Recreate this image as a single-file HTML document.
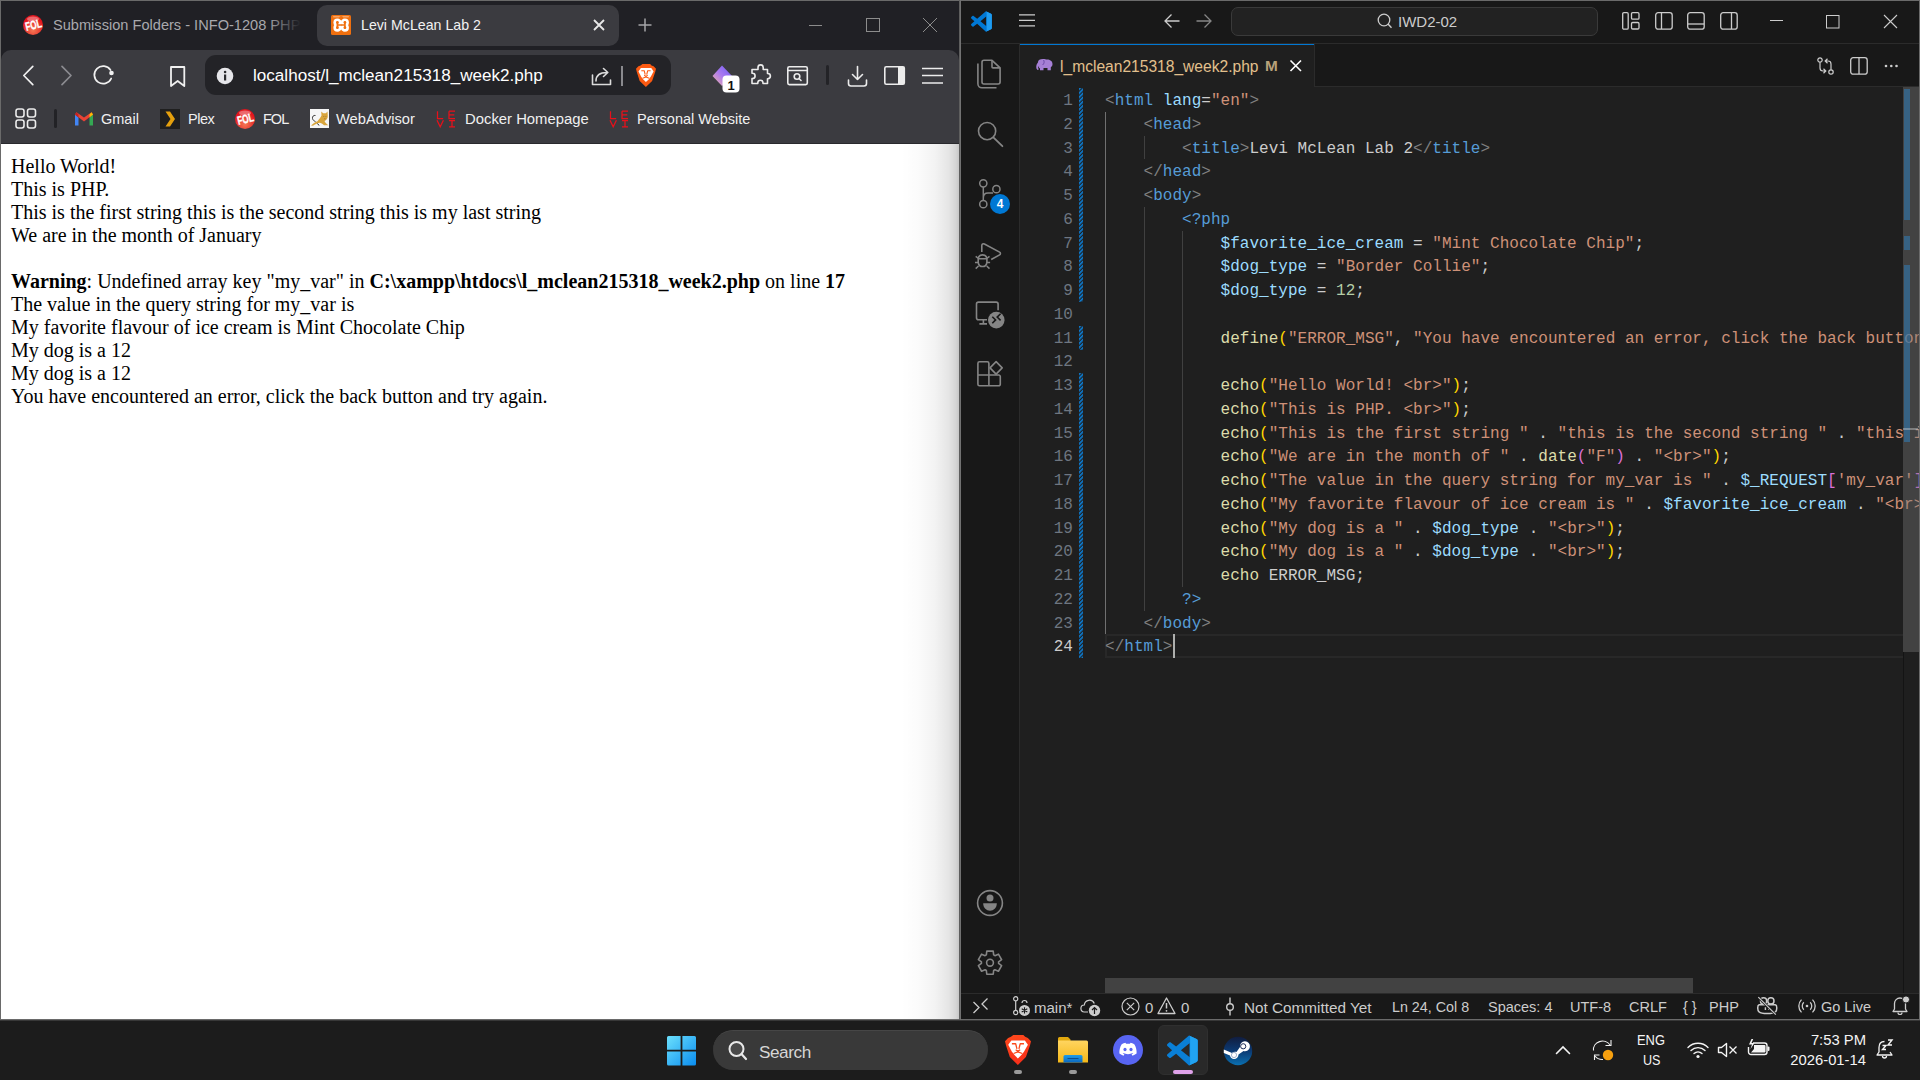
<!DOCTYPE html>
<html><head><meta charset="utf-8">
<style>
*{box-sizing:border-box;margin:0;padding:0}
html,body{width:1920px;height:1080px;overflow:hidden;background:#1c1c1c;font-family:"Liberation Sans",sans-serif}
.a{position:absolute}
svg{position:absolute;overflow:visible}
/* browser */
#br{position:absolute;left:0;top:0;width:961px;height:1021px;background:#6a6a6a}
#brin{position:absolute;left:1px;top:1px;width:958px;height:1018px;background:#202025;overflow:hidden}
#tb{position:absolute;left:0;top:49px;width:958px;height:94px;background:#3b3b40;border-radius:10px 10px 0 0}
#content{position:absolute;left:0;top:142px;width:958px;height:876px;background:#fff;border-top:1px solid #29292d}
#page{position:absolute;left:10px;top:11px;font-family:"Liberation Serif",serif;font-size:20px;line-height:23px;color:#000;white-space:pre}
.bk{top:110px;font-size:14.5px;color:#f0f0f0;white-space:pre;line-height:17px}
.levi{top:108px;font-family:"Liberation Mono",monospace;font-size:10px;line-height:9.5px;color:#e8141e;font-weight:bold;white-space:pre}
/* vscode */
#vs{position:absolute;left:961px;top:0;width:959px;height:1021px;background:#6a6a6a}
#vsin{position:absolute;left:0;top:1px;width:958px;height:1018px;background:#181818;overflow:hidden}
.code{font-family:"Liberation Mono",monospace;font-size:16px;letter-spacing:0.025px;white-space:pre;color:#cccccc}
.t{color:#808080}.n{color:#569cd6}.at{color:#9cdcfe}.s{color:#ce9178}.v{color:#9cdcfe}.f{color:#dcdcaa}.nu{color:#b5cea8}.y{color:#ffd700}.p{color:#da70d6}.w{color:#cccccc}
/* taskbar */
#task{position:absolute;left:0;top:1021px;width:1920px;height:59px;background:#1c1c1c}
</style></head><body>
<div id="br"><div id="brin">
  <!-- tab strip -->
  <svg style="left:21px;top:13px" width="22" height="22" viewBox="0 0 22 22"><defs><radialGradient id="folg" cx=".5" cy=".75" r=".6"><stop offset="0" stop-color="#f47a55"/><stop offset="1" stop-color="#e2141c"/></radialGradient></defs><circle cx="11" cy="11" r="10" fill="url(#folg)"/><ellipse cx="11" cy="5" rx="6" ry="2.5" fill="#fff" opacity=".35"/><text x="11.4" y="15.3" font-family="Liberation Sans" font-weight="bold" font-size="12" fill="#fff" stroke="#fff" stroke-width=".4" text-anchor="middle" textLength="16.5" lengthAdjust="spacingAndGlyphs" transform="rotate(-14 11 11)">FOL</text></svg>
  <div class="a" style="left:52px;top:15px;font-size:14.6px;color:#a9a9ad;white-space:pre;line-height:18px">Submission Folders - INFO-1208 PHP</div>
  <div class="a" style="left:266px;top:5px;width:40px;height:38px;background:linear-gradient(90deg,rgba(32,32,37,0),#202025 85%)"></div>
  <div class="a" style="left:316px;top:4px;width:302px;height:41px;background:#3b3b40;border-radius:10px"></div>
  <svg style="left:330px;top:14px" width="20" height="20" viewBox="0 0 20 20"><rect x="0" y="0" width="20" height="20" rx="1.5" fill="#f0700f"/><rect x="2" y="1" width="16" height="1.5" rx=".7" fill="#f7b27a" opacity=".8"/><g fill="#fff"><circle cx="6.4" cy="7.4" r="4"/><circle cx="13.9" cy="7.4" r="4"/><circle cx="6.4" cy="12.7" r="4"/><circle cx="13.9" cy="12.7" r="4"/></g><circle cx="10.15" cy="2.8" r="1.9" fill="#f0700f"/><circle cx="10.15" cy="17.3" r="1.9" fill="#f0700f"/><path d="M6.4 7.4V12.7M13.9 7.4V12.7M6.4 10H13.9" stroke="#f0700f" stroke-width="1.7" stroke-linecap="round"/><circle cx="6.4" cy="7.4" r="1.4" fill="#f0700f"/><circle cx="13.9" cy="7.4" r="1.4" fill="#f0700f"/><circle cx="6.4" cy="12.7" r="1.4" fill="#f0700f"/><circle cx="13.9" cy="12.7" r="1.4" fill="#f0700f"/></svg>
  <div class="a" style="left:360px;top:15px;font-size:14.2px;color:#f2f2f2;white-space:pre;line-height:18px">Levi McLean Lab 2</div>
  <svg style="left:592px;top:18px" width="12" height="12" viewBox="0 0 12 12"><path d="M1 1L11 11M11 1L1 11" stroke="#e8e8e8" stroke-width="1.8"/></svg>
  <svg style="left:636px;top:16px" width="16" height="16" viewBox="0 0 16 16"><path d="M8 1.5V14.5M1.5 8H14.5" stroke="#a4a4a8" stroke-width="1.5"/></svg>
  <!-- window controls -->
  <svg style="left:807px;top:17px" width="16" height="16" viewBox="0 0 16 16"><path d="M1 7.5H14" stroke="#8c8c8c" stroke-width="1"/></svg>
  <svg style="left:864px;top:16px" width="16" height="16" viewBox="0 0 16 16"><rect x="1.5" y="1.5" width="13" height="13" fill="none" stroke="#8c8c8c" stroke-width="1"/></svg>
  <svg style="left:921px;top:16px" width="16" height="16" viewBox="0 0 16 16"><path d="M1 1L15 15M15 1L1 15" stroke="#8c8c8c" stroke-width="1"/></svg>

  <div id="tb"></div>
  <!-- nav icons -->
  <svg style="left:20px;top:63px" width="14" height="24" viewBox="0 0 14 24"><path d="M11.8 2.3L2.8 11.5L11.8 20.7" fill="none" stroke="#f0f0f0" stroke-width="1.7" stroke-linecap="round" stroke-linejoin="round"/></svg>
  <svg style="left:58px;top:63px" width="14" height="24" viewBox="0 0 14 24"><path d="M3 2.3L12 11.5L3 20.7" fill="none" stroke="#8b8b90" stroke-width="1.7" stroke-linecap="round" stroke-linejoin="round"/></svg>
  <svg style="left:92px;top:63px" width="24" height="24" viewBox="0 0 24 24"><path d="M18.2 14.5 A8.8 8.8 0 1 1 17.5 6" fill="none" stroke="#f0f0f0" stroke-width="1.7" stroke-linecap="round"/><circle cx="18.5" cy="9" r="2.3" fill="#f0f0f0"/></svg>
  <svg style="left:167px;top:63px" width="20" height="24" viewBox="0 0 20 24"><path d="M3 3H16.3V22L9.65 17L3 22Z" fill="none" stroke="#f0f0f0" stroke-width="1.8" stroke-linejoin="round"/></svg>
  <!-- address bar -->
  <div class="a" style="left:204px;top:54px;width:466px;height:40px;background:#232327;border-radius:11px"></div>
  <svg style="left:215px;top:66px" width="18" height="18" viewBox="0 0 18 18"><circle cx="9" cy="9" r="8.3" fill="#e6e6ea"/><rect x="8" y="7.5" width="2.2" height="6" fill="#2a2a2e"/><circle cx="9.1" cy="5" r="1.3" fill="#2a2a2e"/></svg>
  <div class="a" style="left:252px;top:65px;font-size:17.1px;color:#ffffff;white-space:pre;line-height:20px">localhost/l_mclean215318_week2.php</div>
  <svg style="left:589px;top:63px" width="24" height="24" viewBox="0 0 24 24"><path d="M2.5 11V20.5H20.5V16" fill="none" stroke="#dcdcdc" stroke-width="1.6" stroke-linejoin="round" stroke-linecap="round"/><path d="M6 17C6 11, 10 8.5, 17 8.5M13.5 4.5L17.8 8.5L13.5 12.5" fill="none" stroke="#dcdcdc" stroke-width="1.6" stroke-linecap="round" stroke-linejoin="round"/></svg>
  <div class="a" style="left:620px;top:65px;width:2px;height:20px;background:#8a8a8e"></div>
  <svg style="left:635px;top:63px" width="20" height="23" viewBox="0 0 20 23"><path d="M6.4 0H14.1L15.5 1.4L17.6 2.2L20 4.7L19.2 8L16.1 16.9L9.9 23.1L3.7 16.9L0.8 8L0 4.7L2.4 2.2L4.6 1.4Z" fill="#fb5a12"/><path d="M2.5 7.4L4.9 4.1H15.3L17.6 7.4L14.7 12.7L12.6 15.4L9.9 18.1L7.3 15.4L5.2 12.7Z" fill="#fff"/><path d="M5.3 6.7H8.2L9.2 10.6M14.6 6.7H11.7L10.7 10.6M8.2 11.3L9.95 12.4L11.7 11.3M6.6 14.2L9.95 12.9L13.3 14.2" fill="none" stroke="#fb5a12" stroke-width="1.1" stroke-linejoin="round"/></svg>
  <!-- right toolbar icons -->
  <svg style="left:709px;top:62px" width="34" height="32" viewBox="0 0 34 32"><defs><linearGradient id="rg" x1="0" y1="1" x2="1" y2="0"><stop offset="0" stop-color="#f5b6a0"/><stop offset=".5" stop-color="#a978f0"/><stop offset="1" stop-color="#6d5cf5"/></linearGradient></defs><path d="M2.5 13L12 2.5L22 13L12 23Z" fill="url(#rg)" transform="rotate(0)"/><rect x="12.5" y="12.5" width="17" height="17" rx="4" fill="#fff"/><text x="21" y="26.5" font-family="Liberation Sans" font-weight="bold" font-size="13" fill="#111" text-anchor="middle">1</text></svg>
  <svg style="left:748px;top:62px" width="24" height="24" viewBox="0 0 24 24"><path d="M9 4.5A2.6 2.6 0 0 1 14.2 4.5V6.5H18.5V10.5H18.8A2.6 2.6 0 0 1 18.8 15.7H18.5V20.5H14V19.8A2.6 2.6 0 0 0 8.8 19.8V20.5H3V15.5H3.5A2.6 2.6 0 0 0 3.5 10.3H3V6.5H9Z" fill="none" stroke="#ececec" stroke-width="1.6" stroke-linejoin="round"/></svg>
  <svg style="left:785px;top:64px" width="24" height="22" viewBox="0 0 24 22"><rect x="1.8" y="1.8" width="19.5" height="17.8" rx="1.5" fill="none" stroke="#ececec" stroke-width="1.6"/><path d="M2 5.5H21" stroke="#ececec" stroke-width="1.5"/><circle cx="11" cy="11.5" r="2.8" fill="none" stroke="#ececec" stroke-width="1.6"/><path d="M13 13.5L15 15.5" stroke="#ececec" stroke-width="1.6" stroke-linecap="round"/></svg>
  <div class="a" style="left:825px;top:64px;width:3px;height:20px;border-radius:2px;background:#232327"></div>
  <svg style="left:845px;top:63px" width="24" height="24" viewBox="0 0 24 24"><path d="M11.5 2.5V15.5M6.5 10.5L11.5 15.5L16.5 10.5" fill="none" stroke="#ececec" stroke-width="1.6" stroke-linecap="round" stroke-linejoin="round"/><path d="M2.5 16V19.5A2.5 2.5 0 0 0 5 22H18A2.5 2.5 0 0 0 20.5 19.5V16" fill="none" stroke="#ececec" stroke-width="1.6" stroke-linecap="round"/></svg>
  <svg style="left:882px;top:64px" width="24" height="22" viewBox="0 0 24 22"><rect x="1.8" y="1.8" width="19.5" height="17.5" rx="1.5" fill="none" stroke="#ececec" stroke-width="1.6"/><rect x="15" y="1.8" width="6.3" height="17.5" fill="#ececec"/></svg>
  <svg style="left:919px;top:64px" width="24" height="22" viewBox="0 0 24 22"><path d="M2 3.5H23M2 10.5H23M2 18H23" stroke="#ececec" stroke-width="1.6"/></svg>
  <!-- bookmarks -->
  <svg style="left:13px;top:106px" width="24" height="24" viewBox="0 0 24 24"><rect x="2" y="2" width="8" height="8" rx="2.2" fill="none" stroke="#ececec" stroke-width="1.6"/><rect x="13.5" y="2" width="8" height="8" rx="2.2" fill="none" stroke="#ececec" stroke-width="1.6"/><rect x="2" y="13" width="8" height="8" rx="2.2" fill="none" stroke="#ececec" stroke-width="1.6"/><rect x="13.5" y="13" width="8" height="8" rx="2.2" fill="none" stroke="#ececec" stroke-width="1.6"/></svg>
  <div class="a" style="left:53px;top:108px;width:2.5px;height:19px;border-radius:2px;background:#222226"></div>
  <svg style="left:73px;top:110px" width="20" height="16" viewBox="0 0 20 16"><path d="M1 3.5V14.5H4.5V6.5Z" fill="#4285f4"/><path d="M15.5 6.5V14.5H19V3.5Z" fill="#34a853"/><path d="M1 3.5L10 10.5L19 3.5L17.5 1.2L10 6.5L2.5 1.2Z" fill="#ea4335"/><path d="M15.5 3.5V6.5L19 3.5L17.5 1.2Z" fill="#fbbc04"/><path d="M1 3.5L4.5 6.5V3.5L2.5 1.2Z" fill="#c5221f"/></svg>
  <div class="a bk" style="left:100px">Gmail</div>
  <svg style="left:159px;top:108px" width="20" height="20" viewBox="0 0 20 20"><rect width="20" height="20" fill="#1f1f1f"/><path d="M5.5 2.5H10L15 10L10 17.5H5.5L10.5 10Z" fill="#e5a00d"/></svg>
  <div class="a bk" style="left:187px;letter-spacing:-0.45px">Plex</div>
  <svg style="left:233px;top:107px" width="22" height="22" viewBox="0 0 22 22"><defs><radialGradient id="folg" cx=".5" cy=".75" r=".6"><stop offset="0" stop-color="#f47a55"/><stop offset="1" stop-color="#e2141c"/></radialGradient></defs><circle cx="11" cy="11" r="10" fill="url(#folg)"/><ellipse cx="11" cy="5" rx="6" ry="2.5" fill="#fff" opacity=".35"/><text x="11.4" y="15.3" font-family="Liberation Sans" font-weight="bold" font-size="12" fill="#fff" stroke="#fff" stroke-width=".4" text-anchor="middle" textLength="16.5" lengthAdjust="spacingAndGlyphs" transform="rotate(-14 11 11)">FOL</text></svg>
  <div class="a bk" style="left:262px;letter-spacing:-1px">FOL</div>
  <svg style="left:309px;top:108px" width="19" height="19" viewBox="0 0 19 19"><rect width="19" height="19" fill="#f6f6f6"/><path d="M1 16.5C3 14.5 5 13 7.5 12.2C9 10.5 10.5 8.5 11.5 6.5L11.2 2.5L13.2 4.3H15.8L17.5 2.5L17.8 7C17.8 9.5 16.5 11 14.5 12C15.5 14 17 15.5 18.5 16.2H14C12.5 15 11 13.8 9.5 13.8C7 14.5 5 15.5 3 16.8Z" fill="#d9a53c"/><path d="M5.5 6.5C3.5 6 2.2 7.5 2.5 9.5C2.8 11 4 12 5.5 12.5" fill="none" stroke="#222" stroke-width=".9"/><path d="M7.5 14.5L9 16.5" stroke="#222" stroke-width="1"/><path d="M13.5 7.2L14.2 8M16.2 7.2L15.5 8M14.2 9.8H15.5" stroke="#7a5a20" stroke-width=".6"/></svg>
  <div class="a bk" style="left:335px;font-size:14.7px">WebAdvisor</div>
  <svg style="left:435px;top:109px" width="22" height="20" viewBox="0 0 22 20"><path d="M1.5 1.2V8.6H7.2M13 1.2H19M13 1.2V8.6H19M13 4.9H18.3M1 10.2L4.2 16.8L7.4 10.2M13 10.5H19M16 10.5V16.8M13 16.8H19" fill="none" stroke="#e8101a" stroke-width="1.25"/></svg>
  <div class="a bk" style="left:464px;font-size:14.85px">Docker Homepage</div>
  <svg style="left:608px;top:109px" width="22" height="20" viewBox="0 0 22 20"><path d="M1.5 1.2V8.6H7.2M13 1.2H19M13 1.2V8.6H19M13 4.9H18.3M1 10.2L4.2 16.8L7.4 10.2M13 10.5H19M16 10.5V16.8M13 16.8H19" fill="none" stroke="#e8101a" stroke-width="1.25"/></svg>
  <div class="a bk" style="left:636px">Personal Website</div>

  <div id="content">
    <div class="a" style="right:0;top:0;width:58px;height:876px;background:linear-gradient(90deg,rgba(0,0,0,0),rgba(0,0,0,.015) 30%,rgba(0,0,0,.05) 60%,rgba(0,0,0,.1) 82%,rgba(0,0,0,.16) 94%,rgba(0,0,0,.22))"></div>
    <div id="page">Hello World!
This is PHP.
This is the first string this is the second string this is my last string
We are in the month of January

<b>Warning</b>: Undefined array key "my_var" in <b>C:\xampp\htdocs\l_mclean215318_week2.php</b> on line <b>17</b>
The value in the query string for my_var is 
My favorite flavour of ice cream is Mint Chocolate Chip
My dog is a 12
My dog is a 12
You have encountered an error, click the back button and try again.</div>
  </div>
</div></div>
<div class="a" style="left:959px;top:0;width:1px;height:1021px;background:#5e5e5e"></div><div class="a" style="left:960px;top:0;width:1px;height:1021px;background:#727272"></div>
<div id="vs"><div id="vsin">
<div class="a" style="left:0px;top:42px;width:958px;height:1px;background:#2b2b2b"></div>
<div class="a" style="left:58px;top:43px;width:1px;height:949px;background:#2b2b2b"></div>
<div class="a" style="left:354px;top:85px;width:604px;height:1px;background:#2b2b2b"></div>
<div class="a" style="left:59px;top:43px;width:294px;height:43px;background:#1f1f1f"></div>
<div class="a" style="left:59px;top:43px;width:294px;height:1px;background:#0078d4"></div>
<div class="a" style="left:353px;top:43px;width:1px;height:43px;background:#2b2b2b"></div>
<div class="a" style="left:59px;top:86px;width:899px;height:906px;background:#1f1f1f"></div>
<div class="a" style="left:0px;top:992px;width:958px;height:1px;background:#2b2b2b"></div>
<svg style="left:10px;top:10px" width="22" height="21" viewBox="0 0 22 21"><g transform="scale(0.21)"><path d="M71 1.5L95.5 13.2C97.8 14.3 99.2 16.6 99.2 19.1V80.9C99.2 83.4 97.8 85.7 95.5 86.8L71 98.5L29.4 60.6L12.2 73.7C10.6 74.9 8.4 74.8 6.9 73.5L1.4 68.5C-.4 66.8 -.4 64 1.4 62.3L16.3 48.8L1.4 35.3C-.4 33.6 -.4 30.8 1.4 29.1L6.9 24.1C8.4 22.8 10.6 22.7 12.2 23.9L29.4 37L71 1.5ZM72.5 26.7L45 48.8L72.5 70.9Z" fill="#0078d4" fill-rule="evenodd"/><path d="M71 1.5L95.5 13.2C97.8 14.3 99.2 16.6 99.2 19.1V80.9C99.2 83.4 97.8 85.7 95.5 86.8L71 98.5C73 97 74.5 95 74.5 92V7.5C74.5 4.5 73 2.5 71 1.5Z" fill="#1f9cf0"/></g></svg>
<svg style="left:57px;top:11px" width="18" height="16" viewBox="0 0 18 16"><path d="M1 2.8H17M1 8.3H17M1 13.8H17" stroke="#cccccc" stroke-width="1.3"/></svg>
<svg style="left:202px;top:11px" width="18" height="18" viewBox="0 0 18 18"><path d="M16.5 9H2M8.5 2.5L2 9L8.5 15.5" fill="none" stroke="#cccccc" stroke-width="1.3"/></svg>
<svg style="left:234px;top:11px" width="18" height="18" viewBox="0 0 18 18"><path d="M1.5 9H16M9.5 2.5L16 9L9.5 15.5" fill="none" stroke="#868686" stroke-width="1.3"/></svg>
<div class="a" style="left:270px;top:6px;width:367px;height:29px;background:#222222;border:1px solid #3a3a3a;border-radius:7px"></div>
<svg style="left:414px;top:11px" width="18" height="18" viewBox="0 0 18 18"><circle cx="9" cy="8" r="5.8" fill="none" stroke="#cccccc" stroke-width="1.3"/><path d="M13 12L16.5 15.8" stroke="#cccccc" stroke-width="1.4"/></svg>
<div class="a" style="left:437px;top:12px;white-space:pre;font-size:15px;line-height:17px;color:#cccccc">IWD2-02</div>
<svg style="left:660px;top:10px" width="20" height="20" viewBox="0 0 20 20"><rect x="1.7" y="1.7" width="5.5" height="16.5" rx="1.2" fill="none" stroke="#cccccc" stroke-width="1.3"/><rect x="10.5" y="1.7" width="7.5" height="6.5" rx="1.2" fill="none" stroke="#cccccc" stroke-width="1.3"/><rect x="10.5" y="11.5" width="7.5" height="6.5" rx="1.2" fill="none" stroke="#cccccc" stroke-width="1.3"/></svg>
<svg style="left:693px;top:10px" width="20" height="20" viewBox="0 0 20 20"><rect x="1.7" y="1.7" width="16.5" height="16.5" rx="2.5" fill="none" stroke="#cccccc" stroke-width="1.3"/><path d="M7.5 2V18" stroke="#cccccc" stroke-width="1.3"/></svg>
<svg style="left:725px;top:10px" width="20" height="20" viewBox="0 0 20 20"><rect x="1.7" y="1.7" width="16.5" height="16.5" rx="2.5" fill="none" stroke="#cccccc" stroke-width="1.3"/><path d="M2 13H18" stroke="#cccccc" stroke-width="1.3"/></svg>
<svg style="left:758px;top:10px" width="20" height="20" viewBox="0 0 20 20"><rect x="1.7" y="1.7" width="16.5" height="16.5" rx="2.5" fill="none" stroke="#cccccc" stroke-width="1.3"/><path d="M12.5 2V18" stroke="#cccccc" stroke-width="1.3"/></svg>
<svg style="left:807px;top:11px" width="18" height="18" viewBox="0 0 18 18"><path d="M2 8.5H15" stroke="#cccccc" stroke-width="1"/></svg>
<svg style="left:863px;top:12px" width="18" height="18" viewBox="0 0 18 18"><rect x="2.5" y="2.5" width="12.5" height="12.5" fill="none" stroke="#cccccc" stroke-width="1"/></svg>
<svg style="left:921px;top:12px" width="18" height="18" viewBox="0 0 18 18"><path d="M2 2L15 15M15 2L2 15" stroke="#cccccc" stroke-width="1.1"/></svg>
<svg style="left:74px;top:57px" width="19" height="14" viewBox="0 0 19 14"><path d="M3 4C3 2 5 1 8 1C10 1 11 1.5 12 1.5C15 1.5 17.5 3 17.5 6C17.5 7.5 17 8.5 15.8 9.2V12.2H12.5V10H8.5V12.2H5V10.5C4 10 3.5 9 3.2 8C2.8 9 3 10.5 4 11.2L2.5 12C1.2 11 1 9 1.5 7C2 5.5 3 5 3 4Z" fill="#a67fd6"/><path d="M8.6 2C9.4 3.5 9.4 5.5 7.6 7" fill="none" stroke="#6c48a8" stroke-width="1"/></svg>
<div class="a" style="left:99px;top:57px;white-space:pre;font-size:15.6px;line-height:18px;color:#e2c08d">l_mclean215318_week2.php</div>
<div class="a" style="left:304px;top:56px;white-space:pre;font-size:15.3px;font-weight:bold;line-height:18px;color:#b9a27a">M</div>
<svg style="left:326px;top:56px" width="18" height="18" viewBox="0 0 18 18"><path d="M3.5 3.5L14 14M14 3.5L3.5 14" stroke="#ffffff" stroke-width="1.6"/></svg>
<svg style="left:855px;top:55px" width="20" height="20" viewBox="0 0 20 20"><circle cx="4" cy="4" r="2.2" fill="none" stroke="#cccccc" stroke-width="1.2"/><circle cx="15" cy="16" r="2.2" fill="none" stroke="#cccccc" stroke-width="1.2"/><path d="M4 6.2V12C4 14 5 15 7 15H9.5M7.5 12.8L9.8 15L7.5 17.2" fill="none" stroke="#cccccc" stroke-width="1.2"/><path d="M15 13.8V8C15 6 14 5 12 5H9.5M11.5 2.8L9.2 5L11.5 7.2" fill="none" stroke="#cccccc" stroke-width="1.2"/></svg>
<svg style="left:888px;top:55px" width="20" height="20" viewBox="0 0 20 20"><rect x="1.7" y="1.7" width="16.5" height="16.5" rx="2.5" fill="none" stroke="#cccccc" stroke-width="1.3"/><path d="M10 2V18" stroke="#cccccc" stroke-width="1.3"/></svg>
<svg style="left:923px;top:62px" width="16" height="6" viewBox="0 0 16 6"><circle cx="2" cy="3" r="1.3" fill="#cccccc"/><circle cx="7.3" cy="3" r="1.3" fill="#cccccc"/><circle cx="12.5" cy="3" r="1.3" fill="#cccccc"/></svg>
<svg style="left:9px;top:51px" width="40" height="44" viewBox="0 0 40 44"><path d="M12 10.3A2 2 0 0 1 14 8.3H22L30.1 15.9V30A2 2 0 0 1 28.1 32H14A2 2 0 0 1 12 30Z" fill="none" stroke="#858585" stroke-width="1.6" stroke-linejoin="round"/><path d="M22 8.3V14.9A1 1 0 0 0 23 15.9H30.1" fill="none" stroke="#858585" stroke-width="1.6"/><path d="M7.9 11.4V31.8A4 4 0 0 0 11.9 35.8H26.5" fill="none" stroke="#858585" stroke-width="1.6"/></svg>
<svg style="left:9px;top:111px" width="40" height="44" viewBox="0 0 40 44"><circle cx="17.1" cy="19.1" r="8.6" fill="none" stroke="#858585" stroke-width="1.6"/><path d="M23.6 25.6L32.4 34.2" stroke="#858585" stroke-width="1.8" stroke-linecap="round"/></svg>
<svg style="left:14px;top:176px" width="32" height="40" viewBox="0 0 32 40"><circle cx="8.3" cy="6.3" r="3.6" fill="none" stroke="#858585" stroke-width="1.5"/><circle cx="21.4" cy="12.2" r="3.6" fill="none" stroke="#858585" stroke-width="1.5"/><circle cx="8.3" cy="27.2" r="3.6" fill="none" stroke="#858585" stroke-width="1.5"/><path d="M8.3 10V23.5M8.3 21C8.3 17.5 10 16 13 16H18" fill="none" stroke="#858585" stroke-width="1.5"/><circle cx="25" cy="27" r="10" fill="#0078d4"/><text x="25" y="31.3" font-family="Liberation Sans" font-weight="bold" font-size="12" fill="#fff" text-anchor="middle">4</text></svg>
<svg style="left:9px;top:235px" width="40" height="44" viewBox="0 0 40 44"><path d="M11.8 15.9V9.5A1.8 1.8 0 0 1 14.4 8L29.6 16.1A1.6 1.6 0 0 1 29.6 18.9L21.2 23.5" fill="none" stroke="#858585" stroke-width="1.6" stroke-linejoin="round"/><path d="M8.2 22.8A4.4 4.6 0 0 1 16.9 22.8V26.3A4.4 5 0 0 1 8.2 26.3Z" fill="none" stroke="#858585" stroke-width="1.6"/><path d="M8.3 22.8H16.8M5.7 20.3L8.5 22.5M19.5 20.3L16.7 22.5M5 26.5H8.2M20.1 26.5H16.9M5.7 32.6L8.5 30M19.5 32.6L16.7 30" fill="none" stroke="#858585" stroke-width="1.5"/></svg>
<svg style="left:9px;top:293px" width="40" height="44" viewBox="0 0 40 44"><path d="M17 25.7H8.5A2 2 0 0 1 6.5 23.7V10.1A2 2 0 0 1 8.5 8.1H26.1A2 2 0 0 1 28.1 10.1V16.3" fill="none" stroke="#858585" stroke-width="1.6"/><path d="M13.4 25.7V29.9M9.4 29.9H17" fill="none" stroke="#858585" stroke-width="1.6"/><circle cx="26.3" cy="26.1" r="8.3" fill="#858585"/><path d="M22.3 22.7L25.6 25.9L22.3 29.2M30.6 19.8L27.2 23.1L30.6 26.3" fill="none" stroke="#181818" stroke-width="1.6"/></svg>
<svg style="left:9px;top:351px" width="40" height="44" viewBox="0 0 40 44"><path d="M7.9 23V11.4A1.6 1.6 0 0 1 9.5 9.8H17.3A1.6 1.6 0 0 1 18.9 11.4V33.8H9.5A1.6 1.6 0 0 1 7.9 32.2Z M7.9 23H28.7A1.6 1.6 0 0 1 30.3 24.6V32.2A1.6 1.6 0 0 1 28.7 33.8H18.9" fill="none" stroke="#858585" stroke-width="1.6" stroke-linejoin="round"/><path d="M26.1 9.6L32.2 15.9L26.1 22.1L20 15.9Z" fill="none" stroke="#858585" stroke-width="1.6" stroke-linejoin="round"/></svg>
<svg style="left:9px;top:881px" width="40" height="44" viewBox="0 0 40 44"><circle cx="20" cy="21" r="12.4" fill="none" stroke="#858585" stroke-width="1.6"/><circle cx="20" cy="16" r="3.5" fill="#858585"/><path d="M13.2 21.3H26.8C26.8 26 23.5 28.8 20 28.8C16.5 28.8 13.2 26 13.2 21.3Z" fill="#858585"/></svg>
<svg style="left:9px;top:941px" width="40" height="44" viewBox="0 0 40 44"><path d="M16.34 12.92 L16.80 9.13 L23.20 9.13 L23.66 12.92 L24.91 13.64 L28.42 12.15 L31.62 17.69 L28.57 19.98 L28.57 21.42 L31.62 23.71 L28.42 29.25 L24.91 27.76 L23.66 28.48 L23.20 32.27 L16.80 32.27 L16.34 28.48 L15.09 27.76 L11.58 29.25 L8.38 23.71 L11.43 21.42 L11.43 19.98 L8.38 17.69 L11.58 12.15 L15.09 13.64Z" fill="none" stroke="#858585" stroke-width="1.6" stroke-linejoin="round"/><circle cx="20" cy="20.7" r="3.4" fill="none" stroke="#858585" stroke-width="1.6"/></svg>
<svg style="left:118px;top:87.0px" width="4" height="213.75"><defs><pattern id="hp" width="2.9" height="2.9" patternUnits="userSpaceOnUse" patternTransform="rotate(-45)"><rect width="2.9" height="2.9" fill="#1f1f1f"/><rect width="2.9" height="1.7" fill="#0c7bd0"/></pattern></defs><rect width="4" height="213.75" fill="url(#hp)"/></svg>
<svg style="left:118px;top:324.5px" width="4" height="23.75"><rect width="4" height="23.75" fill="url(#hp)"/></svg>
<svg style="left:118px;top:372.0px" width="4" height="285.0"><rect width="4" height="285.0" fill="url(#hp)"/></svg>
<div class="a" style="left:144px;top:633px;width:798px;height:24px;border:2px solid #282828;border-right:none"></div>
<div class="a" style="left:144.00px;top:110.75px;width:1px;height:522.50px;background:#707070"></div>
<div class="a" style="left:182.50px;top:134.50px;width:1px;height:23.75px;background:#404040"></div>
<div class="a" style="left:182.50px;top:205.75px;width:1px;height:403.75px;background:#404040"></div>
<div class="a" style="left:221.00px;top:229.50px;width:1px;height:356.25px;background:#404040"></div>
<div class="a code" style="left:59px;top:86px;width:899px;height:906px;overflow:hidden">
<div class="a" style="left:0;top:3.00px;width:53px;text-align:right;line-height:23.75px;color:#6e7681">1</div>
<div class="a" style="left:85px;top:3.00px;line-height:23.75px"><span class="t">&lt;</span><span class="n">html</span><span class="w"> </span><span class="at">lang</span><span class="w">=</span><span class="s">"en"</span><span class="t">&gt;</span></div>
<div class="a" style="left:0;top:26.75px;width:53px;text-align:right;line-height:23.75px;color:#6e7681">2</div>
<div class="a" style="left:85px;top:26.75px;line-height:23.75px"><span class="w">    </span><span class="t">&lt;</span><span class="n">head</span><span class="t">&gt;</span></div>
<div class="a" style="left:0;top:50.50px;width:53px;text-align:right;line-height:23.75px;color:#6e7681">3</div>
<div class="a" style="left:85px;top:50.50px;line-height:23.75px"><span class="w">        </span><span class="t">&lt;</span><span class="n">title</span><span class="t">&gt;</span><span class="w">Levi McLean Lab 2</span><span class="t">&lt;/</span><span class="n">title</span><span class="t">&gt;</span></div>
<div class="a" style="left:0;top:74.25px;width:53px;text-align:right;line-height:23.75px;color:#6e7681">4</div>
<div class="a" style="left:85px;top:74.25px;line-height:23.75px"><span class="w">    </span><span class="t">&lt;/</span><span class="n">head</span><span class="t">&gt;</span></div>
<div class="a" style="left:0;top:98.00px;width:53px;text-align:right;line-height:23.75px;color:#6e7681">5</div>
<div class="a" style="left:85px;top:98.00px;line-height:23.75px"><span class="w">    </span><span class="t">&lt;</span><span class="n">body</span><span class="t">&gt;</span></div>
<div class="a" style="left:0;top:121.75px;width:53px;text-align:right;line-height:23.75px;color:#6e7681">6</div>
<div class="a" style="left:85px;top:121.75px;line-height:23.75px"><span class="w">        </span><span class="n">&lt;?php</span></div>
<div class="a" style="left:0;top:145.50px;width:53px;text-align:right;line-height:23.75px;color:#6e7681">7</div>
<div class="a" style="left:85px;top:145.50px;line-height:23.75px"><span class="w">            </span><span class="v">$favorite_ice_cream</span><span class="w"> = </span><span class="s">"Mint Chocolate Chip"</span><span class="w">;</span></div>
<div class="a" style="left:0;top:169.25px;width:53px;text-align:right;line-height:23.75px;color:#6e7681">8</div>
<div class="a" style="left:85px;top:169.25px;line-height:23.75px"><span class="w">            </span><span class="v">$dog_type</span><span class="w"> = </span><span class="s">"Border Collie"</span><span class="w">;</span></div>
<div class="a" style="left:0;top:193.00px;width:53px;text-align:right;line-height:23.75px;color:#6e7681">9</div>
<div class="a" style="left:85px;top:193.00px;line-height:23.75px"><span class="w">            </span><span class="v">$dog_type</span><span class="w"> = </span><span class="nu">12</span><span class="w">;</span></div>
<div class="a" style="left:0;top:216.75px;width:53px;text-align:right;line-height:23.75px;color:#6e7681">10</div>
<div class="a" style="left:85px;top:216.75px;line-height:23.75px"></div>
<div class="a" style="left:0;top:240.50px;width:53px;text-align:right;line-height:23.75px;color:#6e7681">11</div>
<div class="a" style="left:85px;top:240.50px;line-height:23.75px"><span class="w">            </span><span class="f">define</span><span class="y">(</span><span class="s">"ERROR_MSG"</span><span class="w">, </span><span class="s">"You have encountered an error, click the back button and try again."</span><span class="y">)</span><span class="w">;</span></div>
<div class="a" style="left:0;top:264.25px;width:53px;text-align:right;line-height:23.75px;color:#6e7681">12</div>
<div class="a" style="left:85px;top:264.25px;line-height:23.75px"></div>
<div class="a" style="left:0;top:288.00px;width:53px;text-align:right;line-height:23.75px;color:#6e7681">13</div>
<div class="a" style="left:85px;top:288.00px;line-height:23.75px"><span class="w">            </span><span class="f">echo</span><span class="y">(</span><span class="s">"Hello World! &lt;br&gt;"</span><span class="y">)</span><span class="w">;</span></div>
<div class="a" style="left:0;top:311.75px;width:53px;text-align:right;line-height:23.75px;color:#6e7681">14</div>
<div class="a" style="left:85px;top:311.75px;line-height:23.75px"><span class="w">            </span><span class="f">echo</span><span class="y">(</span><span class="s">"This is PHP. &lt;br&gt;"</span><span class="y">)</span><span class="w">;</span></div>
<div class="a" style="left:0;top:335.50px;width:53px;text-align:right;line-height:23.75px;color:#6e7681">15</div>
<div class="a" style="left:85px;top:335.50px;line-height:23.75px"><span class="w">            </span><span class="f">echo</span><span class="y">(</span><span class="s">"This is the first string "</span><span class="w"> . </span><span class="s">"this is the second string "</span><span class="w"> . </span><span class="s">"this is my last string &lt;br&gt;"</span><span class="y">)</span><span class="w">;</span></div>
<div class="a" style="left:0;top:359.25px;width:53px;text-align:right;line-height:23.75px;color:#6e7681">16</div>
<div class="a" style="left:85px;top:359.25px;line-height:23.75px"><span class="w">            </span><span class="f">echo</span><span class="y">(</span><span class="s">"We are in the month of "</span><span class="w"> . </span><span class="f">date</span><span class="p">(</span><span class="s">"F"</span><span class="p">)</span><span class="w"> . </span><span class="s">"&lt;br&gt;"</span><span class="y">)</span><span class="w">;</span></div>
<div class="a" style="left:0;top:383.00px;width:53px;text-align:right;line-height:23.75px;color:#6e7681">17</div>
<div class="a" style="left:85px;top:383.00px;line-height:23.75px"><span class="w">            </span><span class="f">echo</span><span class="y">(</span><span class="s">"The value in the query string for my_var is "</span><span class="w"> . </span><span class="v">$_REQUEST</span><span class="p">[</span><span class="s">'my_var'</span><span class="p">]</span><span class="w"> . </span><span class="s">"&lt;br&gt;"</span><span class="y">)</span><span class="w">;</span></div>
<div class="a" style="left:0;top:406.75px;width:53px;text-align:right;line-height:23.75px;color:#6e7681">18</div>
<div class="a" style="left:85px;top:406.75px;line-height:23.75px"><span class="w">            </span><span class="f">echo</span><span class="y">(</span><span class="s">"My favorite flavour of ice cream is "</span><span class="w"> . </span><span class="v">$favorite_ice_cream</span><span class="w"> . </span><span class="s">"&lt;br&gt;"</span><span class="y">)</span><span class="w">;</span></div>
<div class="a" style="left:0;top:430.50px;width:53px;text-align:right;line-height:23.75px;color:#6e7681">19</div>
<div class="a" style="left:85px;top:430.50px;line-height:23.75px"><span class="w">            </span><span class="f">echo</span><span class="y">(</span><span class="s">"My dog is a "</span><span class="w"> . </span><span class="v">$dog_type</span><span class="w"> . </span><span class="s">"&lt;br&gt;"</span><span class="y">)</span><span class="w">;</span></div>
<div class="a" style="left:0;top:454.25px;width:53px;text-align:right;line-height:23.75px;color:#6e7681">20</div>
<div class="a" style="left:85px;top:454.25px;line-height:23.75px"><span class="w">            </span><span class="f">echo</span><span class="y">(</span><span class="s">"My dog is a "</span><span class="w"> . </span><span class="v">$dog_type</span><span class="w"> . </span><span class="s">"&lt;br&gt;"</span><span class="y">)</span><span class="w">;</span></div>
<div class="a" style="left:0;top:478.00px;width:53px;text-align:right;line-height:23.75px;color:#6e7681">21</div>
<div class="a" style="left:85px;top:478.00px;line-height:23.75px"><span class="w">            </span><span class="f">echo</span><span class="w"> ERROR_MSG;</span></div>
<div class="a" style="left:0;top:501.75px;width:53px;text-align:right;line-height:23.75px;color:#6e7681">22</div>
<div class="a" style="left:85px;top:501.75px;line-height:23.75px"><span class="w">        </span><span class="n">?&gt;</span></div>
<div class="a" style="left:0;top:525.50px;width:53px;text-align:right;line-height:23.75px;color:#6e7681">23</div>
<div class="a" style="left:85px;top:525.50px;line-height:23.75px"><span class="w">    </span><span class="t">&lt;/</span><span class="n">body</span><span class="t">&gt;</span></div>
<div class="a" style="left:0;top:549.25px;width:53px;text-align:right;line-height:23.75px;color:#cccccc">24</div>
<div class="a" style="left:85px;top:549.25px;line-height:23.75px"><span class="t">&lt;/</span><span class="n">html</span><span class="t">&gt;</span></div>
</div>
<div class="a" style="left:212px;top:633px;width:2px;height:24px;background:#aeafad"></div>
<div class="a" style="left:942px;top:86px;width:16px;height:906px;background:rgba(0,0,0,0)"></div>
<div class="a" style="left:942px;top:651px;width:1px;height:341px;background:#141414"></div>
<div class="a" style="left:942.5px;top:87.7px;width:6px;height:131.6px;background:rgba(0,120,212,.6)"></div>
<div class="a" style="left:942.5px;top:234.8px;width:6px;height:14.0px;background:rgba(0,120,212,.6)"></div>
<div class="a" style="left:942.5px;top:263.6px;width:6px;height:177.9px;background:rgba(0,120,212,.6)"></div>
<div class="a" style="left:942px;top:86px;width:16px;height:565px;background:rgba(121,121,121,.4)"></div>
<div class="a" style="left:942px;top:427px;width:15px;height:2px;background:rgba(200,200,200,.45)"></div>
<div class="a" style="left:144px;top:977px;width:588px;height:15px;background:rgba(121,121,121,.4)"></div>
<svg style="left:11px;top:996px" width="17" height="18" viewBox="0 0 17 18"><path d="M1.5 16.5L7 11L1.5 5.5" fill="none" stroke="#cccccc" stroke-width="1.3" transform="translate(0,-0.5)"/><path d="M15.5 1.5L10 7L15.5 12.5" fill="none" stroke="#cccccc" stroke-width="1.3"/></svg>
<svg style="left:50px;top:995px" width="22" height="22" viewBox="0 0 22 22"><circle cx="4.7" cy="2.8" r="2.1" fill="none" stroke="#cccccc" stroke-width="1.2"/><circle cx="4.7" cy="16.5" r="2.1" fill="none" stroke="#cccccc" stroke-width="1.2"/><path d="M4.7 4.9V14.4" stroke="#cccccc" stroke-width="1.2"/><path d="M11 7A2.5 2.5 0 0 1 16 7" fill="none" stroke="#cccccc" stroke-width="1.2"/><circle cx="13.5" cy="14.4" r="5.5" fill="#cccccc"/><path d="M13.5 11.2V17.6M10.7 12.8L16.3 16M16.3 12.8L10.7 16" stroke="#181818" stroke-width="1.1"/></svg>
<div class="a" style="left:73px;top:997.5px;white-space:pre;font-size:15px;line-height:17px;color:#cccccc;">main*</div>
<svg style="left:119px;top:996px" width="22" height="22" viewBox="0 0 22 22"><path d="M8 15H4.5A3.5 3.5 0 0 1 4.3 8A5.2 5.2 0 0 1 14.3 6.5" fill="none" stroke="#cccccc" stroke-width="1.2"/><circle cx="14.5" cy="13.5" r="5.7" fill="#cccccc"/><path d="M14.5 17V10.5M12 13L14.5 10.5L17 13" fill="none" stroke="#181818" stroke-width="1.2"/></svg>
<svg style="left:159px;top:995px" width="22" height="22" viewBox="0 0 22 22"><circle cx="10.5" cy="10.5" r="8.5" fill="none" stroke="#cccccc" stroke-width="1.2"/><path d="M6.8 6.8L14.2 14.2M14.2 6.8L6.8 14.2" stroke="#cccccc" stroke-width="1.2"/></svg>
<div class="a" style="left:184px;top:997.5px;white-space:pre;font-size:15px;line-height:17px;color:#cccccc;">0</div>
<svg style="left:196px;top:995px" width="22" height="22" viewBox="0 0 22 22"><path d="M9.5 2L18 17.5H1Z" fill="none" stroke="#cccccc" stroke-width="1.3" stroke-linejoin="round"/><path d="M9.5 7V12.5" stroke="#cccccc" stroke-width="1.5"/><circle cx="9.5" cy="14.8" r=".9" fill="#cccccc"/></svg>
<div class="a" style="left:220px;top:997.5px;white-space:pre;font-size:15px;line-height:17px;color:#cccccc;">0</div>
<svg style="left:261px;top:995px" width="16" height="22" viewBox="0 0 16 22"><circle cx="8" cy="11" r="3.3" fill="none" stroke="#cccccc" stroke-width="1.4"/><path d="M8 1.5V7.5M8 14.5V19.5" stroke="#cccccc" stroke-width="1.4"/></svg>
<div class="a" style="left:283px;top:997.5px;white-space:pre;font-size:15px;line-height:17px;color:#cccccc;font-size:15.3px">Not Committed Yet</div>
<div class="a" style="left:431px;top:997.5px;white-space:pre;font-size:15px;line-height:17px;color:#cccccc;font-size:14.3px">Ln 24, Col 8</div>
<div class="a" style="left:527px;top:997.5px;white-space:pre;font-size:15px;line-height:17px;color:#cccccc;font-size:14.5px">Spaces: 4</div>
<div class="a" style="left:609px;top:997.5px;white-space:pre;font-size:15px;line-height:17px;color:#cccccc;font-size:14.5px">UTF-8</div>
<div class="a" style="left:668px;top:997.5px;white-space:pre;font-size:15px;line-height:17px;color:#cccccc;font-size:14.5px">CRLF</div>
<div class="a" style="left:722px;top:997.5px;white-space:pre;font-size:15px;line-height:17px;color:#cccccc;font-size:14.5px">{ }</div>
<div class="a" style="left:748px;top:997.5px;white-space:pre;font-size:15px;line-height:17px;color:#cccccc;font-size:14.5px">PHP</div>
<svg style="left:789px;top:992px" width="30" height="26" viewBox="0 0 30 26"><circle cx="13.6" cy="7.9" r="3.1" fill="none" stroke="#cccccc" stroke-width="1.5"/><circle cx="20.9" cy="7.9" r="3.1" fill="none" stroke="#cccccc" stroke-width="1.5"/><path d="M9 11.8H25.5M9 11.8C7.3 12.5 7.3 17.5 9 18.8C11.5 21.2 23 21.2 25.5 18.8C27.2 17.5 27.2 12.5 25.5 11.8" fill="none" stroke="#cccccc" stroke-width="1.5"/><path d="M15.4 14.3V17M18.9 14.3V17" stroke="#cccccc" stroke-width="1.4"/><path d="M8.3 4.2L25.8 21.7" stroke="#181818" stroke-width="2.6"/><path d="M8.3 4.2L25.8 21.7" stroke="#cccccc" stroke-width="1.2"/></svg>
<svg style="left:835px;top:995px" width="22" height="20" viewBox="0 0 22 20"><circle cx="11" cy="10" r="1.3" fill="#cccccc"/><path d="M7.8 6.3A5.2 5.2 0 0 0 7.8 13.7M14.2 6.3A5.2 5.2 0 0 1 14.2 13.7M5.5 3.6A9 9 0 0 0 5.5 16.4M16.5 3.6A9 9 0 0 1 16.5 16.4" fill="none" stroke="#cccccc" stroke-width="1.3"/></svg>
<div class="a" style="left:860px;top:997.5px;white-space:pre;font-size:15px;line-height:17px;color:#cccccc;font-size:14.5px">Go Live</div>
<svg style="left:930px;top:994px" width="20" height="22" viewBox="0 0 20 22"><path d="M2 16.5H16L14.5 14V8.5A5.5 5.5 0 0 0 3.5 8.5V14Z" fill="none" stroke="#cccccc" stroke-width="1.3" stroke-linejoin="round"/><path d="M7 17.5A2 2 0 0 0 11 17.5" fill="none" stroke="#cccccc" stroke-width="1.2"/><circle cx="15" cy="4.5" r="3.6" fill="#cccccc" stroke="#181818" stroke-width="1"/></svg>
</div></div>
<div id="bline" class="a" style="left:0;top:1020px;width:1920px;height:1px;background:#383838"></div>
<div id="task">
  <!-- windows logo -->
  <svg style="left:667px;top:15px" width="30" height="30" viewBox="0 0 30 30"><defs><linearGradient id="wg" x1="0" y1="0" x2="1" y2="1"><stop offset="0" stop-color="#6ce0fc"/><stop offset="1" stop-color="#0a8df0"/></linearGradient></defs>
    <path d="M1.5 0H13.6V13.8H0V1.5A1.5 1.5 0 0 1 1.5 0Z M15.4 0H27.5A1.5 1.5 0 0 1 29 1.5V13.8H15.4Z M0 15.6H13.6V29.4H1.5A1.5 1.5 0 0 1 0 27.9Z M15.4 15.6H29V27.9A1.5 1.5 0 0 1 27.5 29.4H15.4Z" fill="url(#wg)"/></svg>
  <!-- search -->
  <div class="a" style="left:713px;top:9px;width:275px;height:40px;border-radius:20px;background:#393939;border-top:1px solid #464646"></div>
  <svg style="left:726px;top:18px" width="22" height="24" viewBox="0 0 22 24"><circle cx="10.5" cy="10" r="7" fill="#4a4a4a" stroke="#e8e8e8" stroke-width="2"/><path d="M15.5 15L20 20" stroke="#e8e8e8" stroke-width="2.2" stroke-linecap="round"/></svg>
  <div class="a" style="left:759px;top:20.5px;font-size:17.2px;letter-spacing:-0.45px;line-height:20px;color:#d6d6d6;white-space:pre">Search</div>
  <!-- brave -->
  <svg style="left:1005px;top:14px" width="26" height="30" viewBox="0 0 20 23"><defs><linearGradient id="bg1" x1="0" y1="0" x2="0.3" y2="1"><stop offset="0" stop-color="#ff4a1c"/><stop offset="1" stop-color="#f8301a"/></linearGradient></defs><path d="M6.4 0H14.1L15.5 1.4L17.6 2.2L20 4.7L19.2 8L16.1 16.9L9.9 23.1L3.7 16.9L0.8 8L0 4.7L2.4 2.2L4.6 1.4Z" fill="url(#bg1)"/><path d="M2.5 7.4L4.9 4.1H15.3L17.6 7.4L14.7 12.7L12.6 15.4L9.9 18.1L7.3 15.4L5.2 12.7Z" fill="#fff"/><path d="M5.3 6.7H8.2L9.2 10.6M14.6 6.7H11.7L10.7 10.6M8.2 11.3L9.95 12.4L11.7 11.3M6.6 14.2L9.95 12.9L13.3 14.2" fill="none" stroke="#fa4a1c" stroke-width="1.0" stroke-linejoin="round"/></svg>
  <div class="a" style="left:1014px;top:49px;width:8px;height:4px;border-radius:2px;background:#9a9a9a"></div>
  <!-- explorer -->
  <svg style="left:1057px;top:14px" width="32" height="30" viewBox="0 0 32 30"><defs><linearGradient id="fg" x1="0" y1="0" x2="0" y2="1"><stop offset="0" stop-color="#ffd560"/><stop offset="1" stop-color="#f5b818"/></linearGradient><linearGradient id="fb" x1="0" y1="0" x2="0" y2="1"><stop offset="0" stop-color="#1e9de8"/><stop offset="1" stop-color="#0b68c0"/></linearGradient></defs>
    <path d="M1 3.5A1.5 1.5 0 0 1 2.5 2H11L13.5 4.5V7H1Z" fill="#e2a80e"/>
    <path d="M1 5.5H29.5A1.5 1.5 0 0 1 31 7V27.5H1Z" fill="url(#fg)"/>
    <path d="M6.5 21.5A1.5 1.5 0 0 1 8 20H24A1.5 1.5 0 0 1 25.5 21.5V27.5H6.5Z" fill="url(#fb)"/><path d="M10.5 23.5H21.5" stroke="#0a4f90" stroke-width="1"/></svg>
  <div class="a" style="left:1069px;top:49px;width:8px;height:4px;border-radius:2px;background:#9a9a9a"></div>
  <!-- discord -->
  <svg style="left:1113px;top:14px" width="30" height="30" viewBox="0 0 30 30"><circle cx="15" cy="15" r="15" fill="#5865f2"/>
    <path d="M8.5 9.5C10 8.5 11.5 8 12.5 7.8L13 8.8C14.3 8.6 15.7 8.6 17 8.8L17.5 7.8C18.5 8 20 8.5 21.5 9.5C23 12 23.8 15 23.6 18.5C22.2 19.6 20.8 20.3 19.5 20.7L18.6 19.2C19.2 19 19.8 18.7 20.3 18.3L19.9 18C16.7 19.5 13.3 19.5 10.1 18L9.7 18.3C10.2 18.7 10.8 19 11.4 19.2L10.5 20.7C9.2 20.3 7.8 19.6 6.4 18.5C6.2 15 7 12 8.5 9.5Z" fill="#fff"/>
    <ellipse cx="12" cy="14.5" rx="1.6" ry="1.8" fill="#5865f2"/><ellipse cx="18" cy="14.5" rx="1.6" ry="1.8" fill="#5865f2"/></svg>
  <!-- vscode active -->
  <div class="a" style="left:1158px;top:4px;width:50px;height:50px;border-radius:6px;background:#292929;border:1px solid #2f2f2f"></div>
  <svg style="left:1167px;top:13.5px" width="31" height="31" viewBox="0 0 100 100"><path d="M71 1.5L95.5 13.2C97.8 14.3 99.2 16.6 99.2 19.1V80.9C99.2 83.4 97.8 85.7 95.5 86.8L71 98.5L29.4 60.6L12.2 73.7C10.6 74.9 8.4 74.8 6.9 73.5L1.4 68.5C-.4 66.8 -.4 64 1.4 62.3L16.3 48.8L1.4 35.3C-.4 33.6 -.4 30.8 1.4 29.1L6.9 24.1C8.4 22.8 10.6 22.7 12.2 23.9L29.4 37L71 1.5ZM72.5 26.7L45 48.8L72.5 70.9Z" fill="#0a7fd6" fill-rule="evenodd"/><path d="M71 1.5L95.5 13.2C97.8 14.3 99.2 16.6 99.2 19.1V80.9C99.2 83.4 97.8 85.7 95.5 86.8L71 98.5C73 97 74.5 95 74.5 92V7.5C74.5 4.5 73 2.5 71 1.5Z" fill="#21a3f1"/></svg>
  <div class="a" style="left:1173px;top:49px;width:20px;height:4px;border-radius:2px;background:#dfa2ea"></div>
  <!-- steam -->
  <svg style="left:1223px;top:15px" width="30" height="30" viewBox="0 0 30 30"><defs><linearGradient id="sg" x1="0" y1="0" x2="0" y2="1"><stop offset="0" stop-color="#111d3f"/><stop offset=".5" stop-color="#0b3a73"/><stop offset="1" stop-color="#0a6fb0"/></linearGradient></defs><circle cx="15" cy="15" r="14.2" fill="url(#sg)"/>
    <path d="M0.8 13.5L9 17C10.5 15.8 12 15.5 13.5 16L17 11A5 5 0 1 1 20.5 15L15.5 18.5C15.5 21 13.5 23 11 23C9 23 7.3 21.5 7 19.5L0.8 17Z" fill="#fff"/>
    <circle cx="20.2" cy="10.3" r="2.6" fill="none" stroke="#1b2a55" stroke-width="1"/><circle cx="11" cy="19" r="2.6" fill="none" stroke="#8aa0c0" stroke-width=".8"/></svg>
  <!-- tray -->
  <svg style="left:1554px;top:23px" width="18" height="12" viewBox="0 0 18 12"><path d="M2.5 9.5L9 3L15.5 9.5" fill="none" stroke="#f4f4f4" stroke-width="1.6" stroke-linecap="round"/></svg>
  <svg style="left:1591px;top:17px" width="24" height="26" viewBox="0 0 24 26"><path d="M2.5 12.5A9 8.5 0 0 1 19 7" fill="none" stroke="#f0f0f0" stroke-width="1.1"/><path d="M14.5 7.5H20V2" fill="none" stroke="#f0f0f0" stroke-width="1.1"/><path d="M12 21.5A9 8.5 0 0 1 4 18" fill="none" stroke="#f0f0f0" stroke-width="1.1"/><path d="M8.5 17H3.5V22" fill="none" stroke="#f0f0f0" stroke-width="1.1"/><circle cx="17" cy="17" r="5.2" fill="#f7a00f"/></svg>
  <div class="a" style="left:1637px;top:11px;font-size:15.2px;line-height:16px;color:#f4f4f4;white-space:pre;transform:scaleX(.85);transform-origin:0 0">ENG</div>
  <div class="a" style="left:1643px;top:31px;font-size:15.2px;line-height:16px;color:#f4f4f4;white-space:pre;transform:scaleX(.83);transform-origin:0 0">US</div>
  <svg style="left:1686px;top:19px" width="24" height="20" viewBox="0 0 24 20"><path d="M2 7.5A14 14 0 0 1 22 7.5" fill="none" stroke="#f4f4f4" stroke-width="1.4" stroke-linecap="round"/><path d="M5 10.5A10 10 0 0 1 19 10.5" fill="none" stroke="#f4f4f4" stroke-width="1.4" stroke-linecap="round"/><path d="M8 13.5A6 6 0 0 1 16 13.5" fill="none" stroke="#f4f4f4" stroke-width="1.4" stroke-linecap="round"/><circle cx="12" cy="16.5" r="1.6" fill="#f4f4f4"/></svg>
  <svg style="left:1716px;top:19px" width="24" height="20" viewBox="0 0 24 20"><path d="M2.5 7.5H5.5L10.5 3.5V16.5L5.5 12.5H2.5Z" fill="none" stroke="#f4f4f4" stroke-width="1.4" stroke-linejoin="round"/><path d="M13.5 6.5L20.5 13.5M20.5 6.5L13.5 13.5" stroke="#f4f4f4" stroke-width="1.3"/></svg>
  <svg style="left:1747px;top:17px" width="24" height="20" viewBox="0 0 24 20"><path d="M6 5H17.5A2.5 2.5 0 0 1 20 7.5V14A2.5 2.5 0 0 1 17.5 16.5H4A2.5 2.5 0 0 1 1.5 14V9" fill="none" stroke="#f4f4f4" stroke-width="1.4"/><rect x="20.5" y="8.5" width="2" height="4.5" rx="1" fill="#f4f4f4"/><path d="M7 7H17.5A1 1 0 0 1 18.5 8V13.5A1 1 0 0 1 17.5 14.5H4L7 11Z" fill="#f4f4f4"/><path d="M4.5 1L2 6.5H5L3.5 11L7.5 5H4.5L6.2 1Z" fill="#f4f4f4"/></svg>
  <div class="a" style="left:1780px;top:11px;width:86px;text-align:right;font-size:14.8px;line-height:17px;color:#f4f4f4;white-space:pre">7:53 PM</div>
  <div class="a" style="left:1780px;top:31px;width:86px;text-align:right;font-size:14.8px;line-height:17px;color:#f4f4f4;white-space:pre">2026-01-14</div>
  <svg style="left:1875px;top:18px" width="22" height="22" viewBox="0 0 22 22"><path d="M9.5 2.5C6 2.5 4 5 4 8.5V13L2 16H17L15 13" fill="none" stroke="#f4f4f4" stroke-width="1.3" stroke-linejoin="round"/><path d="M7.5 17A2 2 0 0 0 11.5 17" fill="none" stroke="#f4f4f4" stroke-width="1.3"/><path d="M7.5 6.5H11L7.5 10.5H11" fill="none" stroke="#f4f4f4" stroke-width="1.4"/><path d="M13 1H17L13 6H17" fill="none" stroke="#f4f4f4" stroke-width="1.4"/></svg>
</div>
</body></html>
